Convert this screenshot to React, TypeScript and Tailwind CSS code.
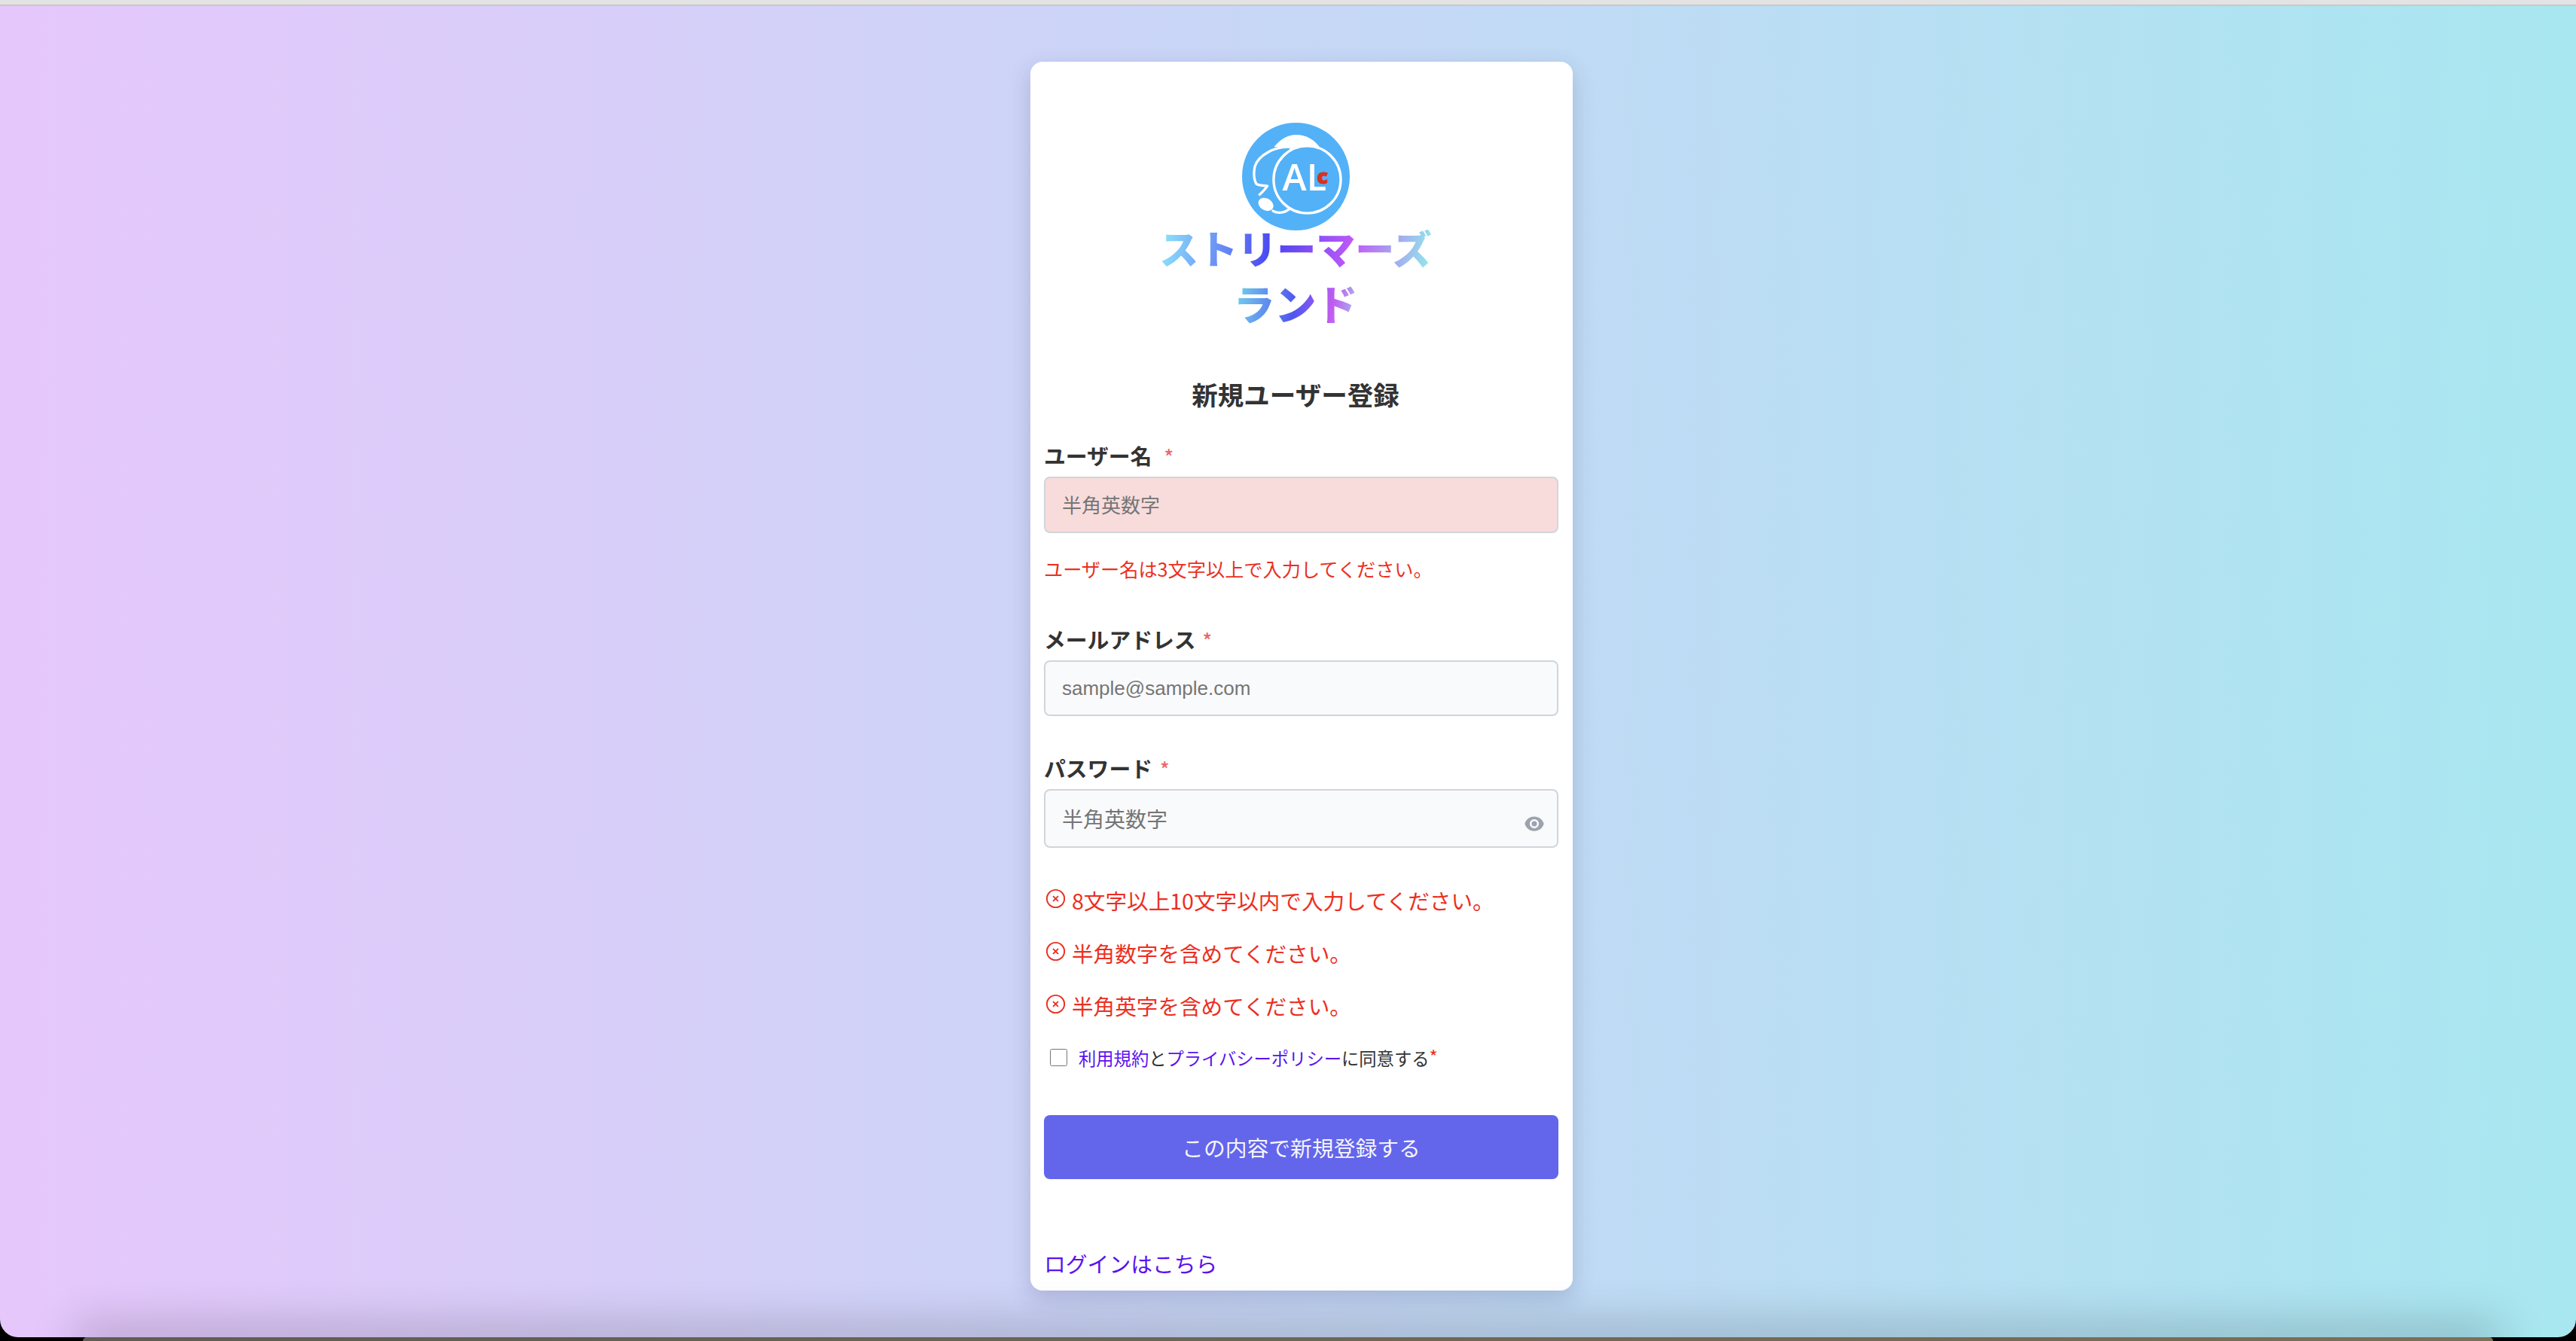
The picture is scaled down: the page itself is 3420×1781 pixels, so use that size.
import { HiEye, HiOutlineXCircle } from 'react-icons/hi2'

const passwordErrors = [
  '8文字以上10文字以内で入力してください。',
  '半角数字を含めてください。',
  '半角英字を含めてください。',
]

function LogoMark() {
  return (
    <svg viewBox="85 40 430 430" className="w-[143px] h-[143px] block">
      <circle cx="300" cy="255" r="215" fill="#53b1f7" />
      <path d="M212 137 C240 104 268 88 302 88 C340 88 374 106 402 146 A134 134 0 0 0 275 153 L275 135 Z" fill="#fff" />
      <circle cx="345" cy="267" r="134" fill="none" stroke="#fff" strokeWidth="10" />
      <path d="M275 137 C215 134 150 170 136 215 C130 245 134 270 142 284 C152 292 172 290 186 293 C176 308 164 318 152 330" fill="none" stroke="#fff" strokeWidth="10" strokeLinejoin="round" />
      <ellipse cx="180" cy="366" rx="32" ry="24" transform="rotate(30 180 366)" fill="#fff" />
      <path d="M208 392 C225 402 250 402 272 386" fill="none" stroke="#fff" strokeWidth="10" strokeLinecap="round" />
      <text x="246" y="310" fill="#fff" fontSize="146" fontWeight="600" fontFamily="'Open Sans', sans-serif">AL</text>
      <text x="384" y="283" fill="#d8321f" fontSize="82" fontWeight="800" fontFamily="'Open Sans', sans-serif" stroke="#d8321f" strokeWidth="3">c</text>
    </svg>
  )
}

function Required({ className }: { className: string }) {
  return <span className={`text-[26px] leading-none font-medium text-[#ea6a6a] ${className}`}>*</span>
}

export default function App() {
  return (
    <div className="h-screen flex flex-col bg-black overflow-hidden font-['Noto_Sans_CJK_JP','Noto_Sans',sans-serif]">
      <div className="h-[8px] bg-[#e3e3e3] border-b-2 border-[#c8c8c8]" />

      <main className="flex-1 flex justify-center items-start pl-[36px] pt-[74px] rounded-b-[24px] bg-[linear-gradient(to_right,#e6c7fc,#a8e7f0)]">
        <div className="w-[720px] h-[1632px] bg-white rounded-[16px] shadow-[0_10px_30px_rgba(40,50,100,0.2)] pt-[81px] pl-[18px]">
          {/* Logo */}
          <div className="w-[668px] flex flex-col items-center">
            <LogoMark />
            <p className="-mt-[13px] text-[52px] leading-[72px] font-black whitespace-nowrap bg-clip-text text-transparent bg-[linear-gradient(100deg,#90eafa_0%,#4a45f2_42%,#bf58f8_70%,#8ff0e8_100%)]">
              ストリーマーズ
            </p>
            <p className="text-[55px] leading-[72px] font-black whitespace-nowrap bg-clip-text text-transparent bg-[linear-gradient(100deg,#76dcea_0%,#4f55f0_50%,#c05cf0_78%,#9fc8f0_100%)]">
              ランド
            </p>
            <h1 className="mt-[64px] text-[34.5px] leading-[44px] font-bold text-[#333]">新規ユーザー登録</h1>
          </div>

          <form className="w-[683px]">
            <label className="block mt-[40px] text-[28.8px] leading-[40px] font-bold text-[#333]">
              ユーザー名<Required className="ml-[16px]" />
            </label>
            <input
              placeholder="半角英数字"
              className="block w-full mt-[8px] h-[75px] pl-[22px] pb-[3px] rounded-[8px] border-2 border-[#d1d5db] bg-[#f8dcdc] text-[26px] placeholder:text-[#757575] outline-none"
            />
            <p className="mt-[31px] text-[25.2px] leading-[32px] text-[#ec2f22]">ユーザー名は3文字以上で入力してください。</p>

            <label className="block mt-[58px] text-[28.8px] leading-[40px] font-bold text-[#333]">
              メールアドレス<Required className="ml-[9px]" />
            </label>
            <input
              placeholder="sample@sample.com"
              className="block w-full mt-[8px] h-[74px] px-[22px] rounded-[8px] border-2 border-[#d1d5db] bg-[#f9fafb] text-[26px] font-['Liberation_Sans',sans-serif] placeholder:text-[#757575] outline-none"
            />

            <label className="block mt-[49px] text-[28.8px] leading-[40px] font-bold text-[#333]">
              パスワード<Required className="ml-[10px]" />
            </label>
            <div className="relative mt-[8px]">
              <input
                placeholder="半角英数字"
                type="text"
                className="block w-full h-[78px] px-[22px] rounded-[8px] border-2 border-[#d1d5db] bg-[#f9fafb] text-[28px] placeholder:text-[#757575] outline-none"
              />
              <HiEye className="absolute right-[18px] top-[32px] text-[#9ca3af]" size={28} />
            </div>

            <ul className="mt-[46px] flex flex-col gap-[22px]">
              {passwordErrors.map((err) => (
                <li key={err} className="flex items-center h-[48px] text-[28.6px] leading-[48px] text-[#ec2f22]">
                  <HiOutlineXCircle size={31} className="shrink-0 -mt-[6px]" />
                  <span className="ml-[6px]">{err}</span>
                </li>
              ))}
            </ul>

            <div className="mt-[25px] flex items-center h-[40px]">
              <input type="checkbox" className="w-[23px] h-[23px] ml-[8px] -mt-[2px] shrink-0" />
              <p className="ml-[15px] text-[23.3px] leading-[40px] text-[#333] whitespace-nowrap">
                <a className="text-[#5a12f0]">利用規約</a>と<a className="text-[#5a12f0]">プライバシーポリシー</a>に同意する
                <span className="text-[#ec2f22] text-[24px] leading-none align-[2px]">*</span>
              </p>
            </div>

            <button type="button" className="block w-full mt-[56px] h-[85px] rounded-[8px] bg-[#6366ea] text-[28.8px] text-white/95">
              この内容で新規登録する
            </button>

            <a className="block mt-[88px] text-[28.8px] leading-[48px] text-[#5a12f0]">ログインはこちら</a>
          </form>
        </div>
      </main>

      {/* Desktop edge below the window, casting a shadow up over the page */}
      <div className="h-[5px] mx-[110px] rounded-t-[10px] bg-[linear-gradient(to_right,#5d5d55,#7b7058)] shadow-[0_0_60px_12px_rgba(0,0,0,0.3)]" />
    </div>
  )
}
